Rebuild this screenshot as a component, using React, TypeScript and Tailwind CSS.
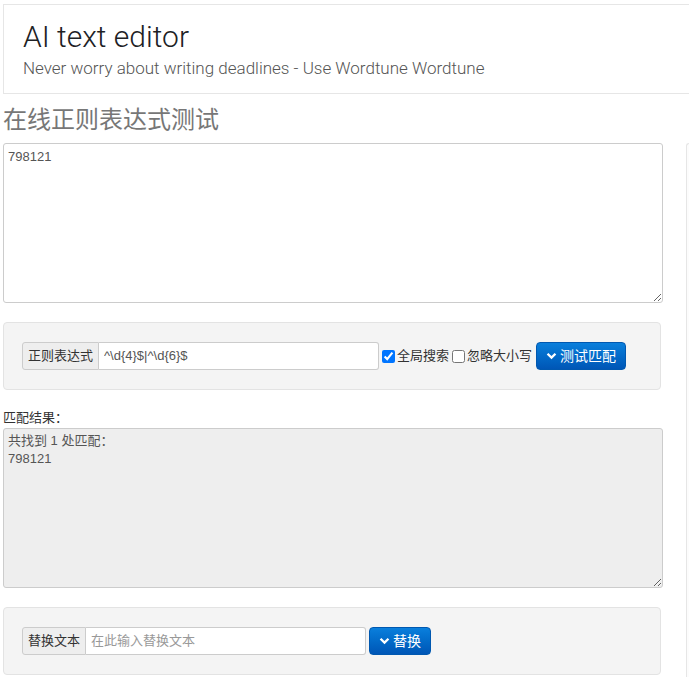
import { useState } from "react";

function Chevron() {
  return (
    <svg width="11" height="9" viewBox="0 0 12 9" className="mr-[3px]" fill="white">
      <path d="M0.8 2.4 2.6 0.6 6 4 9.4 0.6 11.2 2.4 6 7.6Z" />
    </svg>
  );
}

function BlueButton({ label }: { label: string }) {
  return (
    <button className="flex h-[28px] items-center rounded-[4px] border border-[#0058b0] bg-gradient-to-b from-[#0a7fdc] to-[#0056b6] px-[9px] text-[14px] text-white">
      <Chevron />
      {label}
    </button>
  );
}

export default function App() {
  const [source, setSource] = useState("798121");
  const [regex, setRegex] = useState("^\\d{4}$|^\\d{6}$");
  const [replace, setReplace] = useState("");

  return (
    <div className="h-[677px] w-[689px] overflow-hidden bg-white font-['Liberation_Sans','Noto_Sans_CJK_SC',sans-serif] text-[13px] text-[#333]">
      {/* ad banner */}
      <div className="ml-[3px] mt-[4px] h-[90px] w-[700px] border border-[#e6e6e6] px-[19px] pt-[15px] font-['Roboto',sans-serif]">
        <div className="text-[30px] font-light leading-[34px] text-[#202124]">AI text editor</div>
        <div className="mt-[4px] text-[17px] font-light leading-[20px] text-[#555]">
          Never worry about writing deadlines - Use Wordtune Wordtune
        </div>
      </div>

      <h2 className="ml-[3px] mt-[10px] h-[39px] text-[24px] leading-[32px] text-[#777]">在线正则表达式测试</h2>

      <div className="flex">
        <div className="ml-[3px] w-[660px]">
          <textarea
            value={source}
            onChange={(e) => setSource(e.target.value)}
            className="block h-[160px] w-[660px] resize-y rounded-[3px] border border-[#ccc] px-[4px] py-[4px] text-[13px] leading-[18px] text-[#555] outline-none"
          />

          <div className="mt-[19px] h-[68px] w-[658px] rounded-[4px] border border-[#e3e3e3] bg-[#f4f4f4] px-[18px] pt-[19px]">
            <div className="flex items-center">
              <div className="flex h-[28px]">
                <span className="flex items-center rounded-l-[3px] border border-[#ccc] bg-[#eee] px-[5px] text-[#333]">正则表达式</span>
                <input
                  value={regex}
                  onChange={(e) => setRegex(e.target.value)}
                  className="w-[280px] rounded-r-[3px] border border-l-0 border-[#ccc] bg-white px-[5px] text-[13px] text-[#555] outline-none"
                />
              </div>
              <label className="ml-[3px] flex items-center text-[#333]">
                <input type="checkbox" defaultChecked className="m-0 mr-[2px] h-[13px] w-[13px] accent-[#0075ff]" />
                全局搜索
              </label>
              <label className="ml-[3px] flex items-center text-[#333]">
                <input type="checkbox" className="m-0 mr-[2px] h-[13px] w-[13px]" />
                忽略大小写
              </label>
              <div className="ml-[4px]">
                <BlueButton label="测试匹配" />
              </div>
            </div>
          </div>

          <div className="mt-[18px] h-[20px] leading-[20px] text-[#333]">匹配结果：</div>
          <textarea
            readOnly
            value={"共找到 1 处匹配：\n798121"}
            className="block h-[160px] w-[660px] resize-y rounded-[3px] border border-[#ccc] bg-[#eee] px-[4px] pb-[4px] pt-[3px] text-[13px] leading-[18px] text-[#555] outline-none"
          />

          <div className="mt-[19px] h-[68px] w-[658px] rounded-[4px] border border-[#e3e3e3] bg-[#f4f4f4] px-[18px] pt-[19px]">
            <div className="flex items-center">
              <div className="flex h-[28px]">
                <span className="flex items-center rounded-l-[3px] border border-[#ccc] bg-[#eee] px-[5px] text-[#333]">替换文本</span>
                <input
                  value={replace}
                  onChange={(e) => setReplace(e.target.value)}
                  placeholder="在此输入替换文本"
                  className="w-[280px] rounded-r-[3px] border border-l-0 border-[#ccc] bg-white px-[5px] text-[13px] text-[#555] outline-none placeholder:text-[#999]"
                />
              </div>
              <div className="ml-[3px]">
                <BlueButton label="替换" />
              </div>
            </div>
          </div>
        </div>

        {/* sidebar edge */}
        <div className="ml-[23px] h-[540px] flex-1 rounded-tl-[3px] border-l border-t border-[#e6e6e6] bg-[#fcfcfc]" />
      </div>
    </div>
  );
}
